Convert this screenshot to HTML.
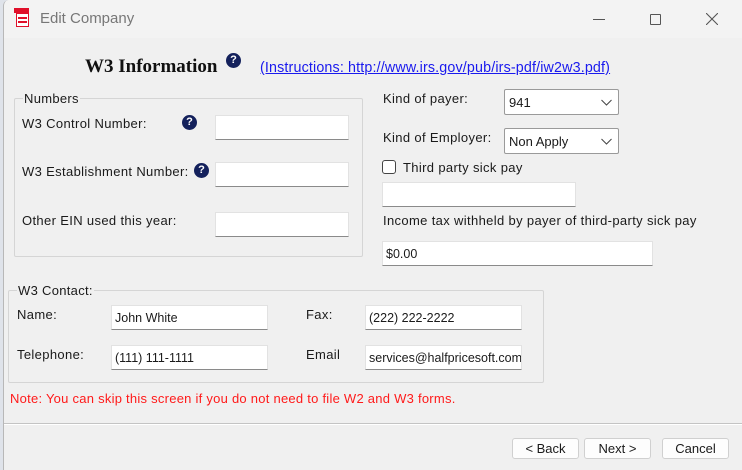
<!DOCTYPE html>
<html><head><meta charset="utf-8"><style>
*{margin:0;padding:0;box-sizing:border-box}
body{width:742px;height:470px;overflow:hidden;background:#dfe3ea;font-family:"Liberation Sans",sans-serif;font-size:13px;color:#1a1a1a;position:relative}
.win{position:absolute;left:3px;top:0;width:739px;height:470px;background:#f0f0f0;border-left:1px solid #b8b8b8;border-radius:6px 0 0 0;overflow:hidden}
.tb{position:absolute;left:0;top:0;width:100%;height:38px;background:#f3f3f3}
.a{position:absolute;white-space:nowrap}
.l{letter-spacing:0.35px}
.in{position:absolute;background:#fff;border:1px solid #e2e2e2;border-bottom:1px solid #8a8a8a;height:25px;padding:5px 3px;font-size:12.5px;overflow:hidden;white-space:nowrap}
.sel{position:absolute;background:#fff;border:1px solid #9a9a9a;border-radius:2px;height:26px;padding:5px 4px;font-size:13px}
.sel svg{position:absolute;right:6px;top:9px}
.q{position:absolute;width:15px;height:15px;border-radius:50%;background:#14215c;color:#fff;font-weight:bold;font-size:11px;text-align:center;line-height:15px}
.grp{position:absolute;border:1px solid #d5d5d5;border-radius:2px}
.grp span{position:absolute;top:-8px;left:8px;background:#f0f0f0;padding:0 1px;font-size:13px;letter-spacing:0.3px}
.btn{position:absolute;top:438px;height:21px;background:#fdfdfd;border:1px solid #d0d0d0;border-radius:3px;text-align:center;line-height:19px;font-size:13px}
</style></head><body>
<div class="win">
<div class="tb"></div>
<div class="a" style="left:10px;top:8px;width:18px;height:20px">
 <div style="position:absolute;left:0;top:0;width:15px;height:5px;background:#e0102a"></div>
 <div style="position:absolute;left:2px;top:5px;width:13px;height:14px;border:1px solid #e0102a;background:#fff"></div>
 <div style="position:absolute;left:4px;top:9px;width:9px;height:2px;background:#e0102a"></div>
 <div style="position:absolute;left:4px;top:13px;width:9px;height:2px;background:#e0102a"></div>
</div>
<div class="a" style="left:36px;top:10px;font-size:15px;color:#777">Edit Company</div>
<div class="a" style="left:589px;top:19px;width:12px;height:1px;background:#555"></div>
<div class="a" style="left:646px;top:14px;width:11px;height:11px;border:1px solid #555;border-radius:1px"></div>
<svg class="a" style="left:702px;top:13px" width="12" height="12"><path d="M0 0L12 12M12 0L0 12" stroke="#555" stroke-width="1.1"/></svg>

<div class="a" style="left:81px;top:56px;font-family:'Liberation Serif',serif;font-weight:bold;font-size:19px;color:#111">W3 Information</div>
<div class="q" style="left:222px;top:53px">?</div>
<div class="a" style="left:256px;top:60px;font-size:14.3px;letter-spacing:0.15px;color:#1a1aee;text-decoration:underline">(Instructions: http://www.irs.gov/pub/irs-pdf/iw2w3.pdf)</div>

<div class="grp" style="left:10px;top:98px;width:349px;height:159px"><span>Numbers</span></div>
<div class="a l" style="left:18px;top:116px">W3 Control Number:</div>
<div class="q" style="left:178px;top:115px">?</div>
<div class="in" style="left:211px;top:115px;width:134px"></div>
<div class="a l" style="left:18px;top:164px">W3 Establishment Number:</div>
<div class="q" style="left:190px;top:163px">?</div>
<div class="in" style="left:211px;top:162px;width:134px"></div>
<div class="a l" style="left:18px;top:213px">Other EIN used this year:</div>
<div class="in" style="left:211px;top:212px;width:134px"></div>

<div class="a l" style="left:379px;top:91px">Kind of payer:</div>
<div class="sel" style="left:500px;top:89px;width:115px">941<svg width="11" height="7"><path d="M0.5 1L5.5 6L10.5 1" fill="none" stroke="#444"/></svg></div>
<div class="a l" style="left:379px;top:130px">Kind of Employer:</div>
<div class="sel" style="left:500px;top:128px;width:115px">Non Apply<svg width="11" height="7"><path d="M0.5 1L5.5 6L10.5 1" fill="none" stroke="#444"/></svg></div>
<div class="a" style="left:378px;top:160px;width:14px;height:14px;border:1px solid #444;border-radius:3px;background:#fff"></div>
<div class="a l" style="left:399px;top:160px">Third party sick pay</div>
<div class="in" style="left:378px;top:182px;width:194px"></div>
<div class="a l" style="left:379px;top:213px">Income tax withheld by payer of third-party sick pay</div>
<div class="in" style="left:378px;top:241px;width:271px">$0.00</div>

<div class="grp" style="left:4px;top:290px;width:536px;height:93px"><span>W3 Contact:</span></div>
<div class="a l" style="left:13px;top:307px">Name:</div>
<div class="in" style="left:107px;top:305px;width:157px">John White</div>
<div class="a l" style="left:13px;top:347px">Telephone:</div>
<div class="in" style="left:107px;top:345px;width:157px">(111) 111-1111</div>
<div class="a l" style="left:302px;top:307px">Fax:</div>
<div class="in" style="left:361px;top:305px;width:157px">(222) 222-2222</div>
<div class="a l" style="left:302px;top:347px">Email</div>
<div class="in" style="left:361px;top:345px;width:157px">services@halfpricesoft.com</div>

<div class="a" style="left:6px;top:391px;color:#ff1a1a;letter-spacing:0.25px">Note: You can skip this screen if you do not need to file W2 and W3 forms.</div>
<div class="a" style="left:0;top:423px;width:100%;height:1px;background:#c4c4c4"></div>
<div class="a" style="left:0;top:424px;width:100%;height:1px;background:#fff"></div>
<div class="btn" style="left:508px;width:67px">&lt; Back</div>
<div class="btn" style="left:580px;width:67px">Next &gt;</div>
<div class="btn" style="left:658px;width:67px">Cancel</div>
</div>
</body></html>
